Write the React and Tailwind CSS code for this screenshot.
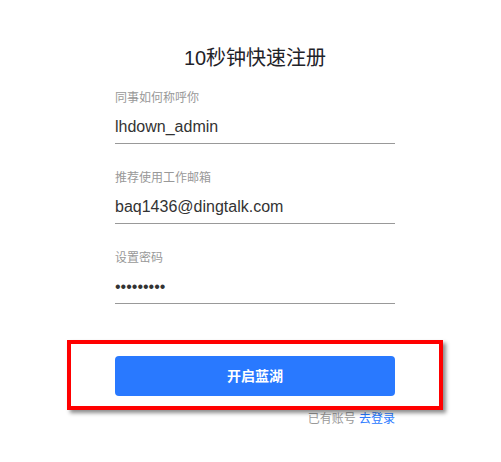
const FONT = "font-['Liberation_Sans','Noto_Sans_CJK_SC',sans-serif]";

const FIELDS = [
  { label: "同事如何称呼你", value: "lhdown_admin" },
  { label: "推荐使用工作邮箱", value: "baq1436@dingtalk.com" },
  { label: "设置密码", value: "•••••••••" },
];

function Field({ label, value, first }) {
  return (
    <div className={first ? "" : "mt-6"}>
      <div className="h-5 text-[12px] leading-5 text-[#999]">{label}</div>
      <div className="h-9 pt-[3px] border-b border-[#999] text-[16px] leading-8 text-[#333]">
        {value}
      </div>
    </div>
  );
}

export default function App() {
  return (
    <div className={`${FONT} w-[501px] h-[462px] bg-white overflow-hidden`}>
      <div className="w-[280px] ml-[115px]">
        <h1 className="mt-[45px] h-[26px] text-center text-[20px] leading-[26px] font-normal text-[#1f2329]">
          10秒钟快速注册
        </h1>
        <form className="mt-[17px]" onSubmit={(e) => e.preventDefault()}>
          {FIELDS.map((f, i) => (
            <Field key={f.label} label={f.label} value={f.value} first={i === 0} />
          ))}
          <div className="relative mt-[52px]">
            <button
              type="submit"
              className="w-full h-10 rounded-[4px] bg-[#2979ff] text-white text-[14px] font-bold"
            >
              开启蓝湖
            </button>
            {/* annotation box drawn over the button */}
            <div className="pointer-events-none absolute -left-[48px] -right-[48px] -top-[16px] -bottom-[14px] border-4 border-[#ff0000] shadow-[3px_3px_4px_rgba(0,0,0,0.45)]" />
          </div>
          <div className="mt-[14px] text-right text-[12px] leading-[18px]">
            <span className="text-[#999]">已有账号 </span>
            <a href="#" className="text-[#2979ff]">
              去登录
            </a>
          </div>
        </form>
      </div>
    </div>
  );
}
